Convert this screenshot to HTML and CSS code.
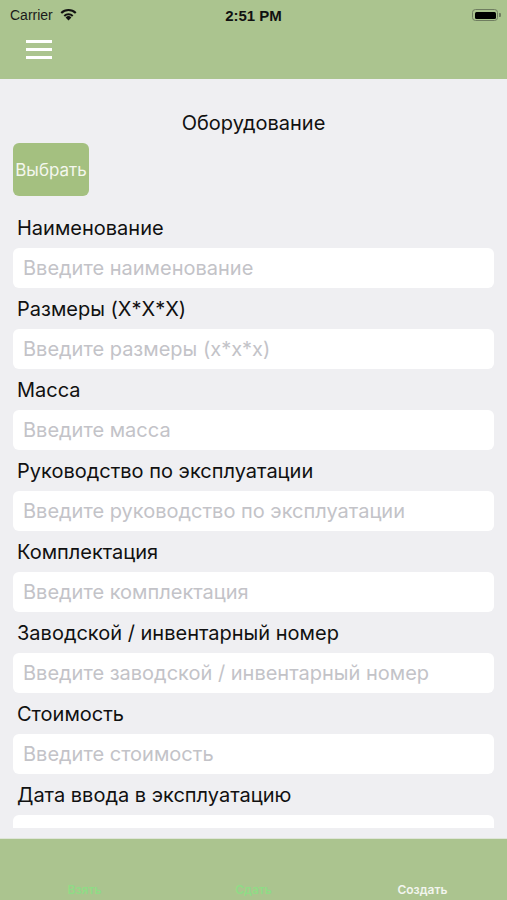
FILE: index.html
```html
<!DOCTYPE html>
<html lang="ru">
<head>
<meta charset="utf-8">
<title>Оборудование</title>
<link rel="stylesheet" href="styles.css">
</head>
<body>
<div class="screen">
  <header class="topbar">
    <div class="status">
      <div class="status-left">
        <span class="carrier">Carrier</span>
        <svg class="wifi" width="19" height="13" viewBox="0 0 19 13">
          <path d="M9.5 12.5 L6.6 9.4 A4.2 4.2 0 0 1 12.4 9.4 Z" fill="#111"/>
          <path d="M4.6 7.3 A7 7 0 0 1 14.4 7.3 L13 8.8 A5 5 0 0 0 6 8.8 Z" fill="#111"/>
          <path d="M1.5 4.2 A11.3 11.3 0 0 1 17.5 4.2 L16 5.8 A9.2 9.2 0 0 0 3 5.8 Z" fill="#111"/>
        </svg>
      </div>
      <span class="time">2:51 PM</span>
      <div class="battery"><div class="battery-fill"></div></div>
    </div>
    <div class="nav">
      <div class="burger"><span></span><span></span><span></span></div>
    </div>
  </header>
  <main class="content">
    <div class="scroll">
      <h1 class="title">Оборудование</h1>
      <button class="pick">Выбрать</button>
      <div class="fields">
        <div class="field"><label>Наименование</label><div class="input">Введите наименование</div></div>
        <div class="field"><label>Размеры (X*X*X)</label><div class="input">Введите размеры (x*x*x)</div></div>
        <div class="field"><label>Масса</label><div class="input">Введите масса</div></div>
        <div class="field"><label>Руководство по эксплуатации</label><div class="input">Введите руководство по эксплуатации</div></div>
        <div class="field"><label>Комплектация</label><div class="input">Введите комплектация</div></div>
        <div class="field"><label>Заводской / инвентарный номер</label><div class="input">Введите заводской / инвентарный номер</div></div>
        <div class="field"><label>Стоимость</label><div class="input">Введите стоимость</div></div>
        <div class="field"><label>Дата ввода в эксплуатацию</label><div class="input"></div></div>
      </div>
    </div>
  </main>
  <nav class="tabbar">
    <span class="tab tab-dim">Взять</span>
    <span class="tab tab-dim">Сдать</span>
    <span class="tab tab-active">Создать</span>
  </nav>
</div>
</body>
</html>
```
FILE: styles.css
```css
* { box-sizing: border-box; }
html, body { margin: 0; padding: 0; }
body {
  font-family: Inter, "Liberation Sans", Arial, sans-serif;
  background: #efeff2;
  color: #111;
}
.screen {
  width: 507px;
  height: 900px;
  display: flex;
  flex-direction: column;
  overflow: hidden;
}
.topbar { background: #abc48f; flex: none; }
.status {
  height: 30px;
  display: flex;
  align-items: center;
  justify-content: space-between;
  padding: 0 9px 0 10px;
  position: relative;
}
.status-left { display: flex; align-items: center; gap: 6px; }
.carrier { font-family: "Liberation Sans", Arial, sans-serif; font-size: 14px; color: #1a1a1a; }
.wifi { display: block; margin-top: -1px; }
.time {
  position: absolute;
  left: 0; right: 0;
  text-align: center;
  font-family: "Liberation Sans", Arial, sans-serif;
  font-size: 15px;
  font-weight: bold;
  color: #111;
}
.battery {
  width: 26px;
  height: 12px;
  border: 1.5px solid #6f7d60;
  border-radius: 3.5px;
  padding: 1.5px;
  position: relative;
}
.battery::after {
  content: "";
  position: absolute;
  right: -4px; top: 3px;
  width: 2px; height: 4px;
  background: #6f7d60;
  border-radius: 0 1px 1px 0;
}
.battery-fill { width: 100%; height: 100%; background: #000; border-radius: 1.5px; }
.nav {
  height: 49px;
  display: flex;
  align-items: flex-start;
  padding: 10px 0 0 26px;
}
.burger { display: flex; flex-direction: column; gap: 5px; }
.burger span { display: block; width: 26px; height: 3px; background: #fff; }
.content {
  flex: 1;
  min-height: 0;
  display: flex;
  flex-direction: column;
  padding-bottom: 10px;
  border-bottom: 1px solid #dfe5d8;
}
.scroll {
  flex: 1;
  min-height: 0;
  overflow: hidden;
  padding: 33px 13px 0 13px;
}
.title {
  margin: 0;
  font-size: 20px;
  font-weight: normal;
  line-height: 23px;
  text-align: center;
  color: #111;
}
.pick {
  display: block;
  margin: 8px 0 0 0;
  width: 76px;
  height: 53px;
  border: 0;
  border-radius: 6px;
  background: #a4c080;
  color: #f4f7ee;
  font-family: Inter, "Liberation Sans", Arial, sans-serif;
  font-size: 17px;
  padding: 0;
  white-space: nowrap;
}
.fields { padding-top: 11px; }
.field { display: flex; flex-direction: column; }
.field label {
  margin: 10px 0 0 4px;
  font-size: 20px;
  line-height: 23px;
  color: #111;
}
.input {
  margin-top: 8px;
  height: 40px;
  flex: none;
  background: #fff;
  border-radius: 6px;
  padding: 0 10px;
  display: flex;
  align-items: center;
  font-size: 20px;
  color: #c3c3c8;
  white-space: nowrap;
}
.tabbar {
  height: 61px;
  flex: none;
  background: #abc48f;
  display: grid;
  grid-template-columns: 1fr 1fr 1fr;
  align-items: end;
  padding-bottom: 3px;
}
.tab {
  text-align: center;
  font-size: 12px;
  font-weight: 600;
  line-height: 14px;
}
.tab-dim { color: #8fdc86; }
.tab-active { color: #f2f5ee; }
```
